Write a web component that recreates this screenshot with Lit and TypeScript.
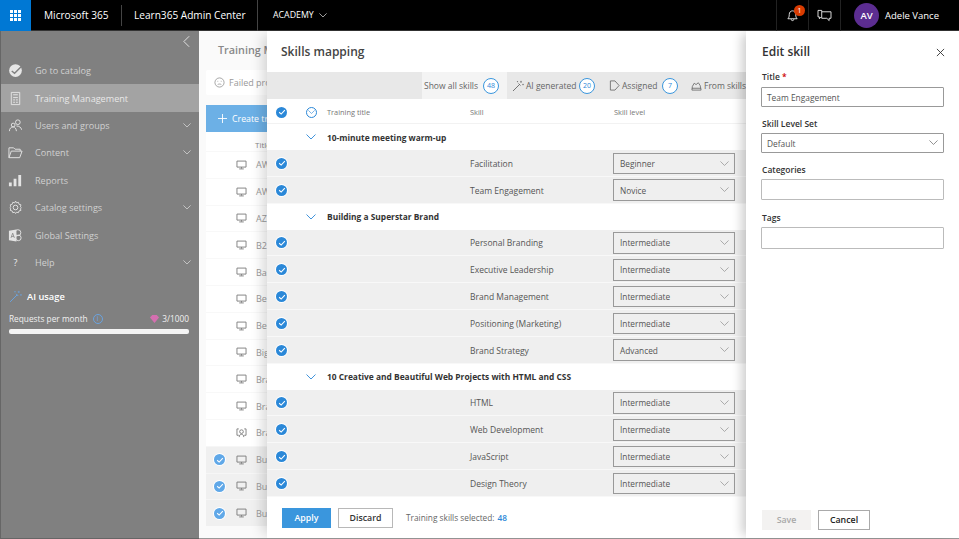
import { LitElement, html, css, svg } from "lit";
import { customElement } from "lit/decorators.js";

const check = html`<span class="chk"><svg viewBox="0 0 12 12" width="10" height="10"><path d="M2.6 6.3 5 8.5 9.4 3.8" fill="none" stroke="#fff" stroke-width="1.3"/></svg></span>`;
const chev = (c = "#888", w = 10) => html`<svg class="chev" viewBox="0 0 10 6" width=${w} height=${w * 0.6}><path d="M.5.5 5 5 9.5.5" fill="none" stroke=${c} stroke-width=".9"/></svg>`;
const monitor = html`<svg viewBox="0 0 12 11" width="11" height="10"><path d="M1 1.2h10v6.6H1zM6 7.8v1.7M3.5 9.8h5" fill="none" stroke="#666" stroke-width="1"/></svg>`;
const person = html`<svg viewBox="0 0 12 11" width="11" height="10"><path d="M3 1H1v7h2M9 1h2v7H9M3.5 10c0-2 1-3 2.500-3s2.500 1 2.500 3" fill="none" stroke="#666" stroke-width="1"/><circle cx="6" cy="4" r="2" fill="none" stroke="#666"/></svg>`;

const S = (d: unknown) => html`<svg viewBox="0 0 16 16" width="15" height="15" fill="none" stroke="#e4e4e4" stroke-width="1">${d}</svg>`;
const navIcons = [
  html`<svg viewBox="0 0 16 16" width="15" height="15"><circle cx="8" cy="8" r="6.800" fill="#e6e6e6"/><path d="M4 8.500 7 11 14 4" fill="none" stroke="#808080" stroke-width="1.500"/></svg>`,
  S(svg`<path d="M3.500 1.500h9v13h-9zM5.500 4h5M5.500 7h5M5.500 9.500h2M8.500 9.500h2M5.500 12h2M8.500 12h2"/>`),
  S(svg`<circle cx="10.500" cy="4.500" r="2.500"/><circle cx="5.500" cy="7.500" r="2"/><path d="M1.500 14c0-3 2-4.500 4-4.500s3 1.500 3.500 4.500M9 8.500c3 0 5 1.500 5.500 4"/>`),
  S(svg`<path d="M1 13.500V3h5l1.500 1.500H13v2M1 13.500 3.500 6.500H15l-2.500 7z"/>`),
  html`<svg viewBox="0 0 16 16" width="15" height="15" fill="#e4e4e4"><path d="M1 10h3v4H1zM6 6h3v8H6zM11 2h3v12h-3z"/></svg>`,
  S(svg`<circle cx="8" cy="8" r="2.500"/><path d="M8 1.500l1 2 2.200-.6.600 2.200 2.200.6-.6 2.300 1.100 1-1.100 1 .6 2-2.200.600-.600 1.900-2.200-.4-1 1.400-1-1.400-2.200.4-.6-1.900-2.200-.6.600-2-1.100-1 1.100-1-.6-2.300 2.200-.6.600-2.200 2.200.6z" transform="translate(.5 -.3) scale(.95)"/>`),
  html`<svg viewBox="0 0 16 16" width="15" height="15"><circle cx="10.500" cy="5" r="3.200" fill="none" stroke="#e4e4e4"/><circle cx="11" cy="10.500" r="3" fill="none" stroke="#e4e4e4"/><path d="M1 3l8-1.500v13L1 13z" fill="#e4e4e4"/><path d="M3.200 10.500 5 5.500l1.800 5M3.800 9h2.400" stroke="#808080" fill="none" stroke-width=".8"/></svg>`,
  html`<span class="qm">?</span>`,
];
const navItems = ["Go to catalog", "Training Management", "Users and groups", "Content", "Reports", "Catalog settings", "Global Settings", "Help"];
const hasChev = new Set([2, 3, 5, 7]);

const wand = (c: string, s = 12) => html`<svg viewBox="0 0 12 12" width=${s} height=${s} fill="none" stroke=${c} stroke-width=".9"><path d="M1 11 7.500 4.500M6.500 3.500l2 2"/><path d="M9 .8v2M8 1.800h2M11 3.800v1.500M10.300 4.500h1.500M5.500 1v1.200M4.900 1.600h1.200" stroke-width=".6"/></svg>`;

type G = { title: string; rows: [string, string][] };
const groups: G[] = [
  { title: "10-minute meeting warm-up", rows: [["Facilitation", "Beginner"], ["Team Engagement", "Novice"]] },
  { title: "Building a Superstar Brand", rows: [["Personal Branding", "Intermediate"], ["Executive Leadership", "Intermediate"], ["Brand Management", "Intermediate"], ["Positioning (Marketing)", "Intermediate"], ["Brand Strategy", "Advanced"]] },
  { title: "10 Creative and Beautiful Web Projects with HTML and CSS", rows: [["HTML", "Intermediate"], ["Web Development", "Intermediate"], ["JavaScript", "Intermediate"], ["Design Theory", "Intermediate"]] },
];
const bgRows = ["AW", "AW", "AZ", "B2", "Bas", "Be", "Bes", "Big", "Bra", "Bra", "Bra", "Bu", "Bu", "Bu"];

@customElement("app-root")
export class AppRoot extends LitElement {
  static styles = css`
    :host { display: block; width: 959px; height: 539px; position: relative; overflow: hidden; background: #fff;
      font-family: "Open Sans", "Noto Sans", sans-serif; font-size: 9px; color: #444; }
    * { box-sizing: border-box; }
    .top { height: 31px; background: #000; color: #fff; display: flex; align-items: center; border-bottom: 1px solid #333; }
    .waffle { width: 31px; height: 31px; background: #0078d4; display: grid; place-items: center; }
    .waffle i { display: grid; grid-template-columns: repeat(3, 3px); gap: 1px; }
    .waffle b { width: 3px; height: 3px; background: #fff; display: block; }
    .brand { font-size: 10.100px; white-space: nowrap; }
    .b1 { margin-left: 13px; width: 77px; }
    .b2 { padding-left: 12px; width: 136px; border-left: 1px solid #444; height: 21px; line-height: 21px; }
    .acad { display: flex; align-items: center; gap: 5px; padding-left: 15px; border-left: 1px solid #444; height: 31px; font-size: 8.800px; }
    .spacer { flex: 1; }
    .tico { width: 32px; height: 31px; border-left: 1px solid #222; display: grid; place-items: center; position: relative; }
    .badge { position: absolute; left: 17px; top: 5px; width: 11px; height: 11px; border-radius: 50%; background: #d83b01; font-size: 7px; line-height: 11px; text-align: center; color: #fff; }
    .user { display: flex; align-items: center; gap: 6px; padding-left: 13px; width: 119px; border-left: 1px solid #222; height: 31px; font-size: 9.500px; white-space: nowrap; }
    .av { width: 25px; height: 25px; border-radius: 50%; background: #5c2d91; display: grid; place-items: center; font-weight: 600; font-size: 9.500px; }

    .body { display: flex; height: 508px; }
    .side { width: 199px; background: #808080; color: #d0d0d0; border-left: 1px solid #666; border-bottom: 1px solid #666; display: flex; flex-direction: column; }
    .coll { height: 26px; padding: 4px 9px 0 0; display: flex; justify-content: flex-end; flex: none; }
    .nav { height: 27.400px; display: flex; align-items: center; padding-left: 7px; font-size: 9.100px; white-space: nowrap; flex: none; }
    .nav.on { background: #a3a3a3; color: #e8e8e8; }
    .nav .ic { width: 27px; display: flex; }
    .nav .lbl { flex: 1; }
    .nav .chev { margin-right: 8px; }
    .qm { font-size: 9px; width: 15px; text-align: center; color: #eee; }
    .ai { display: flex; align-items: center; gap: 5px; padding: 10px 0 0 8px; height: 30px; color: #fff; font-size: 9.300px; font-weight: 600; flex: none; }
    .req { display: flex; align-items: center; padding: 0 10px 0 8px; margin-top: 7px; color: #f0f0f0; font-size: 8.300px; white-space: nowrap; }
    .req .inf { width: 10px; height: 10px; margin-left: 5px; border: 1px solid #6aa4e0; border-radius: 50%; color: #6aa4e0; font-size: 7px; line-height: 8px; text-align: center; }
    .req .n { margin-left: auto; display: flex; gap: 3px; align-items: center; }
    .bar { height: 5px; margin: 5px 10px 0 8px; background: #f4f4f4; border-radius: 2px; }

    .main { flex: 1; background: #fafafa; padding: 0 0 0 7px; display: flex; flex-direction: column; border-bottom: 1px solid #999; }
    .mt { font-size: 10.800px; font-weight: 600; color: #888; margin: 11px 0 0 12px; height: 16px; line-height: 16px; white-space: nowrap; }
    .fail { height: 25px; margin-top: 12px; background: #fff; display: flex; align-items: center; gap: 4px; padding-left: 8px; color: #999; font-size: 9px; white-space: nowrap; border-radius: 2px; flex: none; }
    .create { height: 27px; margin-top: 10px; background: #6cb0e6; color: #fff; display: flex; align-items: center; gap: 5px; padding-left: 12px; font-size: 8.800px; white-space: nowrap; flex: none; }
    .th { height: 19px; padding: 5px 0 0 49px; color: #888; font-size: 8px; display: flex; align-items: center; background: #fff; flex: none; }
    .br { height: 26.800px; display: flex; align-items: center; background: #fff; border-top: 1px solid #f8f8f8; color: #999; font-size: 9px; padding-left: 30px; flex: none; }
    .br.picked { background: #f0f0f0; padding-left: 8px; border-top: 1px solid #f6f6f6; }
    .br svg { margin-right: 9px; opacity: .85; }
    .br .chk { margin-right: 11px; background: #60a8e8; }
    .br .chk svg { margin: 0; opacity: 1; }
    .chk { width: 11px; height: 11px; border-radius: 50%; background: #2b88d8; display: inline-grid; place-items: center; flex: none; box-shadow: 0 0 0 1px #fff; }

    .modal { position: absolute; left: 267px; top: 31px; width: 479px; height: 507px; background: #fff; display: flex; flex-direction: column; box-shadow: -8px 0 12px -4px rgba(0,0,0,.16); }
    .mtitle { height: 41px; padding: 12px 0 0 14px; font-size: 12px; font-weight: 600; color: #444; white-space: nowrap; flex: none; }
    .tabs { height: 27px; display: flex; background: #e8e8e8; padding-left: 155px; align-items: center; color: #666; font-size: 8.500px; white-space: nowrap; overflow: hidden; flex: none; }
    .tab { display: flex; align-items: center; height: 27px; padding-left: 2px; flex: none; }
    .tab.on { background: #f4f4f4; width: 85px; }
    .t2 { width: 100px; padding-left: 5px; }
    .t3 { width: 82px; padding-left: 2px; }
    .t4 { padding-left: 2px; width: 57px; }
    .cnt { width: 16px; height: 16px; border: 1px solid #3a96dd; border-radius: 50%; color: #2b88d8; font-size: 7px; line-height: 14px; text-align: center; background: #fff; margin-left: auto; flex: none; }
    .tab.on .cnt { margin-right: 8px; }
    .t2 .cnt { margin-right: 12px; }
    .t3 .cnt { margin-right: 11px; }
    .tab svg { margin-right: 2px; flex: none; }
    .grid { display: grid; grid-template-columns: 15px 36px 143px 144px 132px; align-items: center; padding-left: 9px; }
    .hd { height: 25px; color: #777; font-size: 7.400px; border-bottom: 1px solid #f2f2f2; flex: none; padding-top: 2px; }
    .ec { width: 11px; height: 11px; border: 1px solid #2b88d8; border-radius: 50%; display: inline-grid; place-items: center; margin-left: 15px; }
    .grp { height: 26px; display: flex; align-items: center; padding-left: 39px; font-weight: 700; font-size: 8.400px; color: #333; gap: 11px; white-space: nowrap; flex: none; }
    .row { height: 26.800px; background: #efefef; border-bottom: 1px solid #f8f8f8; color: #555; font-size: 8.500px; flex: none; padding-top: 1px; }
    .pick { height: 21.500px; width: 122px; margin-left: -1px; background: #efefef; border: 1px solid #999; display: flex; align-items: center; justify-content: space-between; padding: 0 5px 0 6px; color: #555; font-size: 8.300px; }
    .foot { flex: 1; display: flex; align-items: center; padding: 1px 0 0 15px; color: #666; font-size: 8.300px; background: #fff; white-space: nowrap; }
    .btn { height: 20px; display: grid; place-items: center; font-size: 8.800px; font-weight: 600; }
    .apply { width: 49px; background: #3a96dd; color: #fff; }
    .discard { width: 55px; margin: 0 13px 0 7px; border: 1px solid #b8b8b8; color: #333; background: #fff; }
    .foot b { font-weight: 600; color: #2b88d8; margin-left: 3px; }

    .edit { position: absolute; left: 746px; top: 31px; width: 213px; height: 507px; background: #fff; padding: 0 15px 0 15px; display: flex; flex-direction: column; box-shadow: -7px 0 10px -3px rgba(0,0,0,.2); }
    .ehead { height: 40px; padding: 12px 0 0 1px; display: flex; justify-content: space-between; font-size: 12px; font-weight: 600; color: #333; flex: none; }
    .ehead svg { margin: 5px -1px 0 0; }
    .lab { font-size: 8.500px; font-weight: 600; color: #333; height: 15px; line-height: 12px; padding-left: 1px; white-space: nowrap; flex: none; }
    .lab.first { height: 16px; }
    .lab em { color: #c00; font-style: normal; }
    .in { height: 20px; width: 183px; border: 1px solid #999; border-radius: 1px; display: flex; align-items: center; justify-content: space-between; padding: 0 5px; color: #555; font-size: 8.400px; margin-bottom: 11px; flex: none; }
    .in.cat { height: 21px; border-color: #bbb; margin-bottom: 12px; }
    .in.tag { height: 22px; border-color: #bbb; margin-bottom: 0; }
    .eb { margin-top: auto; margin-bottom: 8px; display: flex; gap: 7px; padding-left: 1px; }
    .save { width: 49px; background: #f3f2f1; color: #a8a8a8; }
    .cancel { width: 52px; border: 1px solid #aaa; color: #222; }
  `;

  render() {
    return html`
      <div class="top">
        <div class="waffle"><i>${Array.from({ length: 9 }, () => html`<b></b>`)}</i></div>
        <div class="brand b1">Microsoft 365</div>
        <div class="brand b2">Learn365 Admin Center</div>
        <div class="acad">ACADEMY ${chev("#ddd", 8)}</div>
        <div class="spacer"></div>
        <div class="tico"><svg viewBox="0 0 14 14" width="13" height="13" fill="none" stroke="#fff" stroke-width=".9"><path d="M2 10.500c1-1 1.500-2 1.500-4.500C3.500 3.500 5 2 7 2s3.500 1.500 3.500 4c0 2.500.5 3.500 1.500 4.500zM5.500 11c0 2 3 2 3 0"/></svg><span class="badge">1</span></div>
        <div class="tico"><svg viewBox="0 0 16 14" width="15" height="13" fill="none" stroke="#fff" stroke-width=".9"><path d="M5 3V1.500H1V8.500H2.500V10.500L4.500 8.500M5 3H15V10H13V12.500L10.500 10H5z"/></svg></div>
        <div class="user"><span class="av">AV</span>Adele Vance</div>
      </div>
      <div class="body">
        <div class="side">
          <div class="coll"><svg viewBox="0 0 8 14" width="7" height="13" fill="none" stroke="#eee"><path d="M7 1 1 7l6 6"/></svg></div>
          ${navItems.map((n, i) => html`<div class="nav ${i === 1 ? "on" : ""}"><span class="ic">${navIcons[i]}</span><span class="lbl">${n}</span>${hasChev.has(i) ? chev("#ddd", 8) : ""}</div>`)}
          <div class="ai">${wand("#6aa4e0", 13)}AI usage</div>
          <div class="req">Requests per month<span class="inf">i</span><span class="n"><svg viewBox="0 0 10 10" width="9" height="9"><path d="M2.500 1h5L10 4 5 10 0 4z" fill="#d46fb0"/></svg>3/1000</span></div>
          <div class="bar"></div>
        </div>
        <div class="main">
          <div class="mt">Training Management</div>
          <div class="fail"><svg viewBox="0 0 12 12" width="11" height="11" fill="none" stroke="#888" stroke-width=".8"><circle cx="6" cy="6" r="5"/><path d="M4 8.300c1-.8 3-.8 4 0M3.800 4.700h.8M7.400 4.700h.8"/></svg>Failed processes</div>
          <div class="create"><svg viewBox="0 0 10 10" width="9" height="9"><path d="M5 0v10M0 5h10" stroke="#fff"/></svg>Create training</div>
          <div class="th">Title</div>
          ${bgRows.map((t, i) => html`<div class="br ${i > 10 ? "picked" : ""}">${i > 10 ? check : ""}${i === 10 ? person : monitor}${t}</div>`)}
        </div>
      </div>

      <div class="modal">
        <div class="mtitle">Skills mapping</div>
        <div class="tabs">
          <div class="tab on">Show all skills<span class="cnt">48</span></div>
          <div class="tab t2">${wand("#666")}AI generated<span class="cnt">20</span></div>
          <div class="tab t3"><svg viewBox="0 0 12 12" width="11" height="11" fill="none" stroke="#666" stroke-width=".9"><path d="M1.500 1h5L11 6l-4.500 5h-5z"/></svg>Assigned<span class="cnt">7</span></div>
          <div class="tab t4"><svg viewBox="0 0 12 12" width="11" height="11" fill="none" stroke="#666" stroke-width=".9"><path d="M1 11h10L10 6 8 3 5.500 5 3.500 3.500 1.500 7zM1 9h10"/></svg>From skills</div>
        </div>
        <div class="grid hd">${check}<span><span class="ec">${chev("#2b88d8", 7)}</span></span><span>Training title</span><span>Skill</span><span>Skill level</span></div>
        ${groups.map((g) => html`
          <div class="grp">${chev("#2b88d8", 10)}${g.title}</div>
          ${g.rows.map((r) => html`<div class="grid row">${check}<span></span><span></span><span>${r[0]}</span><span class="pick">${r[1]}${chev("#999", 9)}</span></div>`)}
        `)}
        <div class="foot"><span class="btn apply">Apply</span><span class="btn discard">Discard</span>Training skills selected: <b>48</b></div>
      </div>

      <div class="edit">
        <div class="ehead">Edit skill<svg viewBox="0 0 10 10" width="9" height="9" fill="none" stroke="#333"><path d="M1 1l8 8M9 1 1 9"/></svg></div>
        <div class="lab first">Title <em>*</em></div>
        <div class="in">Team Engagement</div>
        <div class="lab">Skill Level Set</div>
        <div class="in">Default${chev("#777", 9)}</div>
        <div class="lab">Categories</div>
        <div class="in cat"></div>
        <div class="lab">Tags</div>
        <div class="in tag"></div>
        <div class="eb"><span class="btn save">Save</span><span class="btn cancel">Cancel</span></div>
      </div>
    `;
  }
}
